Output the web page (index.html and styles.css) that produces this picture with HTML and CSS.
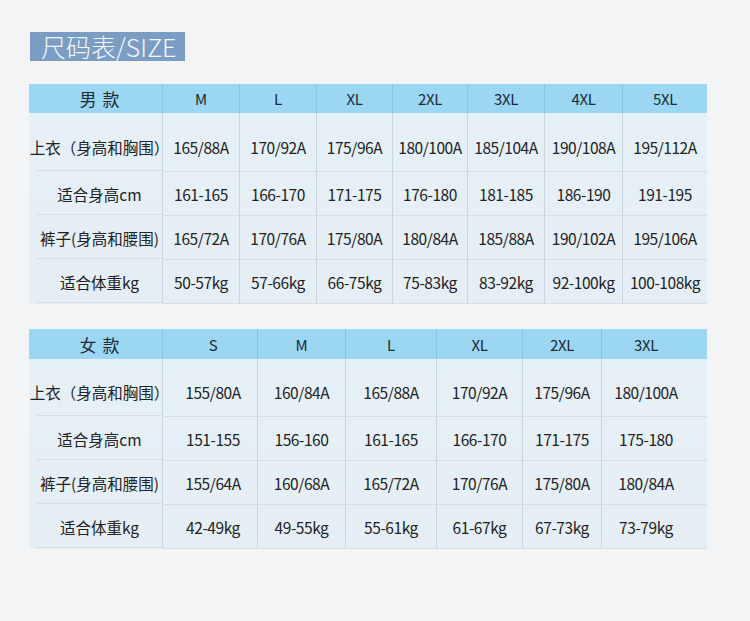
FILE: index.html
```html
<!DOCTYPE html>
<html lang="zh">
<head>
<meta charset="utf-8">
<link rel="stylesheet" href="styles.css">
</head>
<body>
<div class="page">
  <div class="title">尺码表/SIZE</div>

  <div class="chart men">
    <div class="c h lab">男 款</div><div class="c h">M</div><div class="c h">L</div><div class="c h">XL</div><div class="c h">2XL</div><div class="c h">3XL</div><div class="c h">4XL</div><div class="c h last">5XL</div>

    <div class="c lab r1">上衣（身高和胸围）</div><div class="c r1">165/88A</div><div class="c r1">170/92A</div><div class="c r1">175/96A</div><div class="c r1">180/100A</div><div class="c r1">185/104A</div><div class="c r1">190/108A</div><div class="c r1 last">195/112A</div>

    <div class="c lab">适合身高cm</div><div class="c">161-165</div><div class="c">166-170</div><div class="c">171-175</div><div class="c">176-180</div><div class="c">181-185</div><div class="c">186-190</div><div class="c last">191-195</div>

    <div class="c lab">裤子(身高和腰围)</div><div class="c">165/72A</div><div class="c">170/76A</div><div class="c">175/80A</div><div class="c">180/84A</div><div class="c">185/88A</div><div class="c">190/102A</div><div class="c last">195/106A</div>

    <div class="c lab">适合体重kg</div><div class="c">50-57kg</div><div class="c">57-66kg</div><div class="c">66-75kg</div><div class="c">75-83kg</div><div class="c">83-92kg</div><div class="c">92-100kg</div><div class="c last">100-108kg</div>
  </div>

  <div class="chart women">
    <div class="c h lab">女 款</div><div class="c h first">S</div><div class="c h">M</div><div class="c h">L</div><div class="c h">XL</div><div class="c h">2XL</div><div class="c h last">3XL</div>

    <div class="c lab r1">上衣（身高和胸围）</div><div class="c r1 first">155/80A</div><div class="c r1">160/84A</div><div class="c r1">165/88A</div><div class="c r1">170/92A</div><div class="c r1">175/96A</div><div class="c r1 last">180/100A</div>

    <div class="c lab">适合身高cm</div><div class="c first">151-155</div><div class="c">156-160</div><div class="c">161-165</div><div class="c">166-170</div><div class="c">171-175</div><div class="c last">175-180</div>

    <div class="c lab">裤子(身高和腰围)</div><div class="c first">155/64A</div><div class="c">160/68A</div><div class="c">165/72A</div><div class="c">170/76A</div><div class="c">175/80A</div><div class="c last">180/84A</div>

    <div class="c lab">适合体重kg</div><div class="c first">42-49kg</div><div class="c">49-55kg</div><div class="c">55-61kg</div><div class="c">61-67kg</div><div class="c">67-73kg</div><div class="c last">73-79kg</div>
  </div>
</div>
</body>
</html>
```

FILE: styles.css
```css
* { box-sizing: border-box; }
html, body {
  margin: 0;
  padding: 0;
  background: #f3f4f6;
}
body {
  font-family: "Noto Sans CJK SC", "Noto Sans", sans-serif;
  color: #222;
  width: 750px;
  height: 621px;
  overflow: hidden;
}
.page {
  padding: 32px 0 0 29px;
}
.title {
  width: fit-content;
  margin-left: 1px;
  height: 29px;
  line-height: 29px;
  padding: 0 9px 0 11px;
  background: #7b9dc4;
  color: #f4f7fa;
  font-size: 25px;
  font-weight: 300;
}
.chart {
  display: grid;
  width: 678px;
  background: linear-gradient(#e6f1f7, #e4eef4);
  font-size: 15.5px;
  letter-spacing: -0.45px;
}
.men {
  margin-top: 23px;
  grid-template-columns: 134px 77px 77px 76px 75px 77px 78px 84px;
  grid-template-rows: 29px 59px 44px 44px 44px;
}
.women {
  margin-top: 25px;
  grid-template-columns: 134px 95px 88px 91px 86px 79px 105px;
  grid-template-rows: 30px 58px 44px 44px 44px;
}
.c {
  display: flex;
  align-items: center;
  justify-content: center;
  white-space: nowrap;
  border-right: 1px solid #c9d6de;
  border-bottom: 1px solid #d3dee5;
}
.c.last { border-right: none; }
.women .c.first { padding-left: 6px; }
.women .c.last { padding-right: 17px; }
.c.h {
  background: #9bd7f3;
  border-right-color: #88c4e0;
  border-bottom: none;
  font-size: 15px;
  letter-spacing: -0.3px;
  color: #1f2a33;
}
.c.lab {
  padding-left: 8px;
  letter-spacing: 0;
  border-bottom-color: transparent;
  background: linear-gradient(#d3dee5, #d3dee5) no-repeat right bottom / calc(100% - 8px) 1px;
}
.c.h.lab {
  background: #9bd7f3;
  font-size: 17px;
  letter-spacing: 1px;
  padding-left: 9px;
}
.c.r1 { padding-top: 10px; }
.women .c.r1 { padding-top: 8px; }
.women .c.r1.first { padding-left: 6px; }
```
